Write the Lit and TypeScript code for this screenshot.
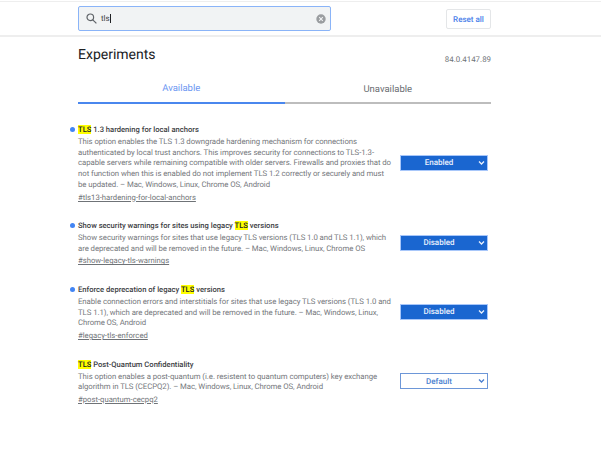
import { LitElement, html, css } from "lit";
import { customElement } from "lit/decorators.js";

type Line = [string, number];
interface Exp { dot: boolean; title: unknown; lines: Line[]; link: string; value: string; }

const m = (s: string) => html`<mark class="hl">${s}</mark>`;

const EXPS: Exp[] = [
  {
    dot: true,
    title: html`${m("TLS")} 1.3 hardening for local anchors`,
    lines: [
      ["This option enables the TLS 1.3 downgrade hardening mechanism for connections", 279],
      ["authenticated by local trust anchors. This improves security for connections to TLS-1.3-", 296],
      ["capable servers while remaining compatible with older servers. Firewalls and proxies that do", 313],
      ["not function when this is enabled do not implement TLS 1.2 correctly or securely and must", 306],
      ["be updated. – Mac, Windows, Linux, Chrome OS, Android", 192],
    ],
    link: "#tls13-hardening-for-local-anchors",
    value: "Enabled",
  },
  {
    dot: true,
    title: html`Show security warnings for sites using legacy ${m("TLS")} versions`,
    lines: [
      ["Show security warnings for sites that use legacy TLS versions (TLS 1.0 and TLS 1.1), which", 308],
      ["are deprecated and will be removed in the future. – Mac, Windows, Linux, Chrome OS", 287],
    ],
    link: "#show-legacy-tls-warnings",
    value: "Disabled",
  },
  {
    dot: true,
    title: html`Enforce deprecation of legacy ${m("TLS")} versions`,
    lines: [
      ["Enable connection errors and interstitials for sites that use legacy TLS versions (TLS 1.0 and", 313],
      ["TLS 1.1), which are deprecated and will be removed in the future. – Mac, Windows, Linux,", 300],
      ["Chrome OS, Android", 68],
    ],
    link: "#legacy-tls-enforced",
    value: "Disabled",
  },
  {
    dot: false,
    title: html`${m("TLS")} Post-Quantum Confidentiality`,
    lines: [
      ["This option enables a post-quantum (i.e. resistent to quantum computers) key exchange", 299],
      ["algorithm in TLS (CECPQ2). – Mac, Windows, Linux, Chrome OS, Android", 245],
    ],
    link: "#post-quantum-cecpq2",
    value: "Default",
  },
];

const ctx = document.createElement("canvas").getContext("2d")!;
ctx.font = "400 7.8px Roboto";
(ctx as unknown as { textRendering: string }).textRendering = "geometricPrecision";

/** Letter spacing that makes a line of the description reach its measured width. */
const spacing = ([text, width]: Line) =>
  `${((width - ctx.measureText(text).width) / text.length).toFixed(3)}px`;

@customElement("app-root")
export class AppRoot extends LitElement {
  static styles = css`
    :host {
      display: block;
      width: 601px;
      height: 461px;
      overflow: hidden;
      background: #fff;
      font-family: Roboto, "Liberation Sans", sans-serif;
      color: #5f6368;
      text-rendering: geometricPrecision;
    }
    .top {
      box-sizing: border-box;
      height: 36px;
      margin-top: 1px;
      border-top: 1px solid #eeeeee;
      border-bottom: 2px solid #eeeeee;
      padding: 4px 110px 0 78px;
      display: flex;
      justify-content: space-between;
      align-items: flex-start;
    }
    .search {
      box-sizing: border-box;
      width: 253px;
      height: 25px;
      background: #f1f3f4;
      border: 1px solid #8ab4f8;
      border-radius: 2px;
      display: flex;
      align-items: center;
      padding: 0 4px 0 7px;
      font-size: 8px;
      color: #3c4043;
    }
    .search .q { flex: 1; margin-left: 4px; display: flex; align-items: center; }
    .caret { display: inline-block; width: 1px; height: 9px; background: #202124; }
    .reset {
      box-sizing: border-box;
      width: 45px;
      height: 20px;
      margin-top: 3px;
      border: 1px solid #e4e6e8;
      border-radius: 2px;
      display: flex;
      align-items: center;
      justify-content: center;
      color: #4a80ea;
      font-size: 8px;
      font-weight: 500;
    }
    .main { width: 413px; margin-left: 78px; }
    .head {
      display: flex;
      justify-content: space-between;
      align-items: flex-end;
      height: 30px;
    }
    h1 {
      margin: 0;
      font-size: 14px;
      line-height: 24px;
      font-weight: 400;
      color: #202124;
    }
    .ver { font-size: 7.9px; line-height: 11px; color: #6f7377; margin-bottom: 2px; }
    .tabs { display: flex; margin-top: 16px; }
    .tab {
      flex: 1;
      height: 21px;
      box-sizing: border-box;
      border-bottom: 2px solid #bdbdbd;
      text-align: center;
      font-size: 9.5px;
      line-height: 14px;
      color: #6a6d71;
    }
    .tab.on { color: #6d97f2; border-bottom-color: #4a87ee; line-height: 12px; }
    .list { margin-top: 20px; display: flex; flex-direction: column; gap: 17.5px; }
    .row {
      display: grid;
      grid-template-columns: 315px 88px;
      column-gap: 7px;
      align-items: center;
      position: relative;
    }
    .title {
      position: relative;
      font-size: 7.6px;
      line-height: 11px;
      font-weight: 500;
      color: #3c4043;
    }
    .dot {
      position: absolute;
      left: -8px;
      top: 3px;
      width: 5px;
      height: 5px;
      border-radius: 50%;
      background: #4285f4;
    }
    .hl { background: #ffff00; color: #202124; }
    .desc {
      margin: 2px 0 0;
      font-size: 7.8px;
      line-height: 10.7px;
      color: #75787c;
    }
    .desc span { display: block; white-space: nowrap; }
    .link {
      display: block;
      margin-top: 1px;
      font-size: 7.7px;
      line-height: 11px;
      color: #6f7377;
      text-decoration: underline;
    }
    .sel {
      box-sizing: border-box;
      height: 16px;
      margin-bottom: 1px;
      padding-right: 10px;
      border: 1px solid #a8c7fa;
      background: #1a66d0;
      color: #eaf1fd;
      font-size: 8px;
      font-weight: 500;
      display: flex;
      align-items: center;
      justify-content: center;
      position: relative;
    }
    .sel.def { background: #fff; border-color: #6d97d8; color: #4a7fd0; }
    .sel svg { position: absolute; right: 2px; top: 4px; }
  `;

  render() {
    return html`
      <div class="top">
        <div class="search">
          <svg width="11" height="11" viewBox="0 0 11 11" fill="none" stroke="#5f6368" stroke-width="1.2">
            <circle cx="4.3" cy="4.3" r="3.3"></circle>
            <path d="M6.8 6.8L10.4 10.4"></path>
          </svg>
          <span class="q">tls<span class="caret"></span></span>
          <svg width="10" height="10" viewBox="0 0 10 10">
            <circle cx="5" cy="5" r="4.7" fill="#9a9da0"></circle>
            <path d="M3.2 3.2L6.8 6.8M6.8 3.2L3.2 6.8" stroke="#f1f3f4" stroke-width="1.1"></path>
          </svg>
        </div>
        <div class="reset">Reset all</div>
      </div>
      <div class="main">
        <div class="head">
          <h1>Experiments</h1>
          <div class="ver">84.0.4147.89</div>
        </div>
        <div class="tabs">
          <div class="tab on">Available</div>
          <div class="tab">Unavailable</div>
        </div>
        <div class="list">
          ${EXPS.map(
            (e) => html`
              <div class="row">
                <div>
                  <div class="title">${e.dot ? html`<span class="dot"></span>` : ""}${e.title}</div>
                  <p class="desc">
                    ${e.lines.map((l) => html`<span style="letter-spacing:${spacing(l)}">${l[0]}</span>`)}
                  </p>
                  <span class="link">${e.link}</span>
                </div>
                <div class="sel ${e.value === "Default" ? "def" : ""}">
                  ${e.value}
                  <svg width="7" height="6" viewBox="0 0 7 6" fill="none" stroke="currentColor" stroke-width="1.3">
                    <path d="M1 1.5L3.5 4L6 1.5"></path>
                  </svg>
                </div>
              </div>
            `
          )}
        </div>
      </div>
    `;
  }
}
